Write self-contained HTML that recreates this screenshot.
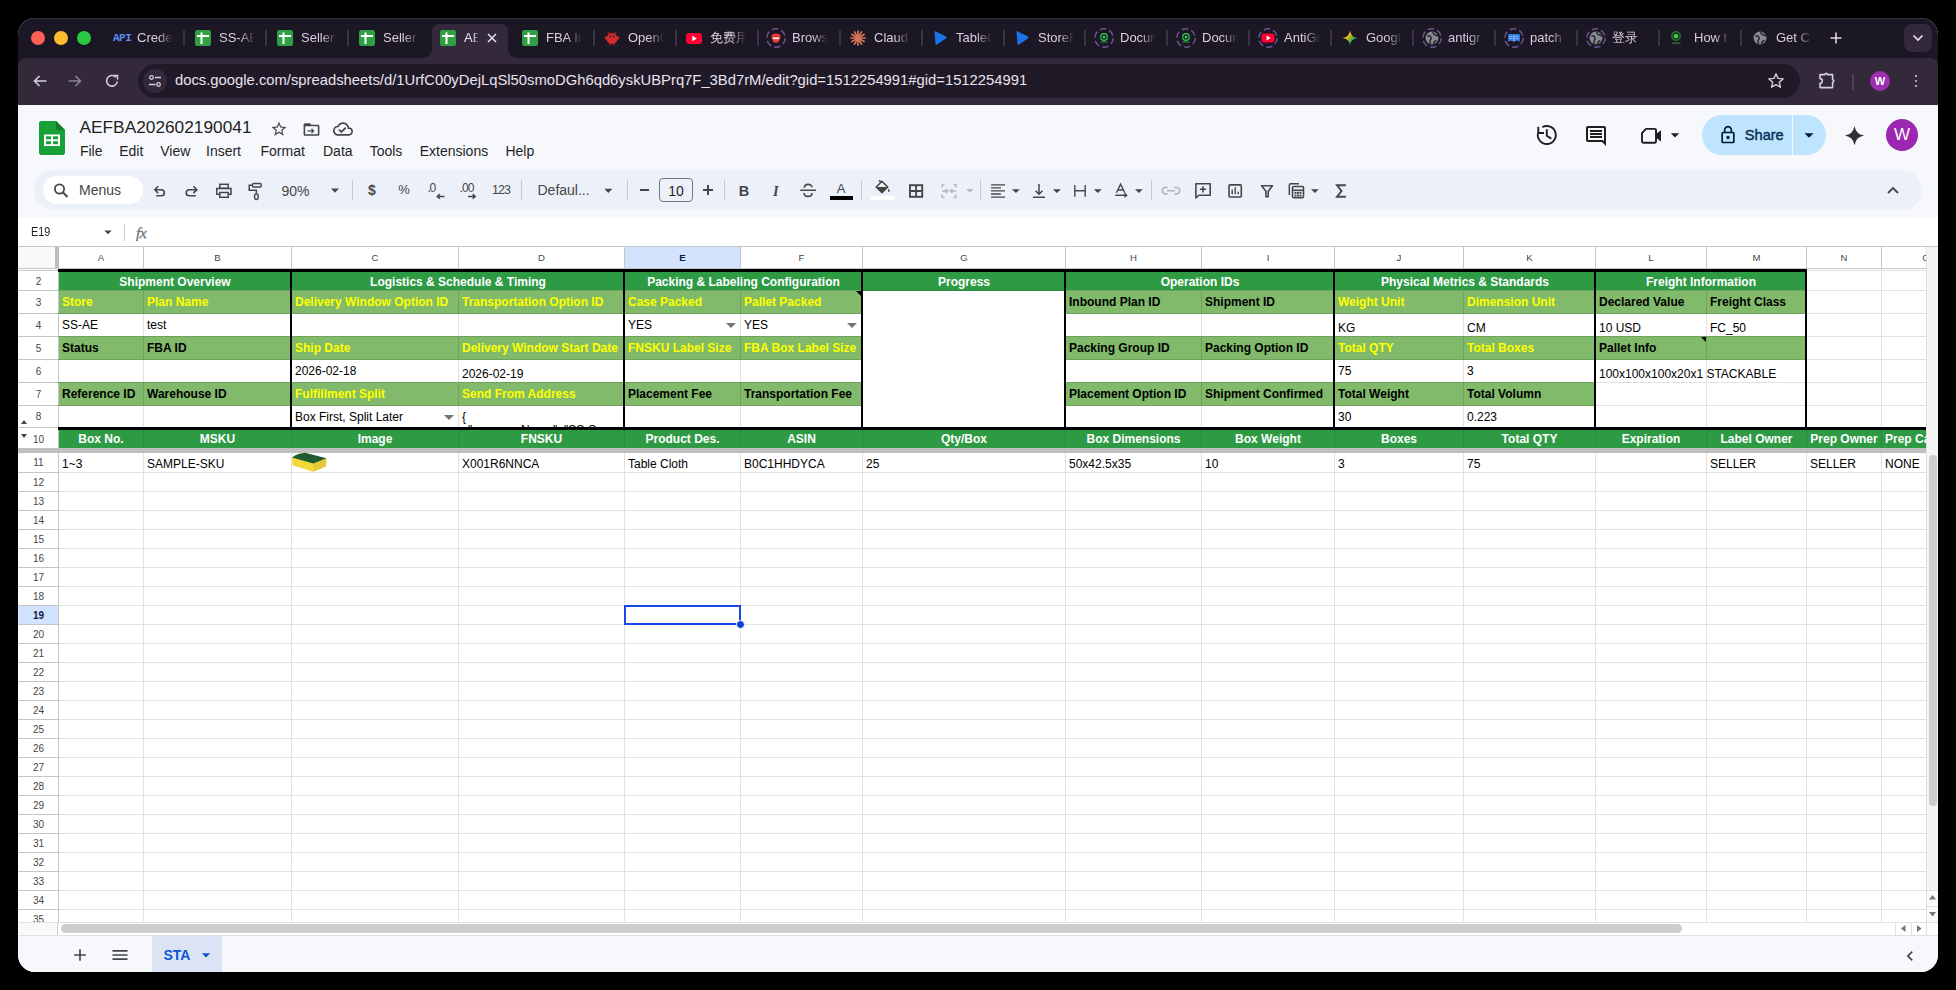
<!DOCTYPE html><html><head><meta charset="utf-8"><style>
*{margin:0;padding:0;box-sizing:border-box}
html,body{width:1956px;height:990px;overflow:hidden;background:#000;font-family:"Liberation Sans",sans-serif}
#win{position:absolute;left:18px;top:18px;width:1920px;height:954px;border-radius:17px;overflow:hidden;background:#fff}
#in{position:absolute;left:-18px;top:-18px;width:1956px;height:990px}
.t{position:absolute;white-space:nowrap}
svg{position:absolute;overflow:visible}
</style></head><body><div id="win"><div id="in">

<div style="position:absolute;left:0px;top:0px;width:1956px;height:105px;background:#1c1724"></div>
<div style="position:absolute;left:18px;top:18px;width:1920px;height:1px;background:#34303b"></div>
<div style="position:absolute;left:31px;top:31px;width:14px;height:14px;background:#ff5f57;border-radius:50%"></div>
<div style="position:absolute;left:54px;top:31px;width:14px;height:14px;background:#febc2e;border-radius:50%"></div>
<div style="position:absolute;left:77px;top:31px;width:14px;height:14px;background:#28c840;border-radius:50%"></div>
<svg style="left:420px;top:24px" width="100" height="34" viewBox="0 0 100 34"><path d="M0 34 Q12 34 12 24 L12 8 Q12 0 20 0 L80 0 Q88 0 88 8 L88 24 Q88 34 100 34 Z" fill="#33293a"/></svg>
<div style="position:absolute;left:183px;top:30px;width:2px;height:16px;background:#3a3443"></div>
<div class="t" style="left:113px;top:33px;font-family:'Liberation Mono',monospace;font-size:11px;line-height:11px;font-weight:bold;color:#5b8def;letter-spacing:-0.5px">API</div>
<div class="t" style="left:137px;top:31px;width:36px;overflow:hidden;font-size:13px;line-height:14px;color:#d9cfe0;-webkit-mask-image:linear-gradient(90deg,#000 58%,transparent 100%)">Crede</div>
<div style="position:absolute;left:265px;top:30px;width:2px;height:16px;background:#3a3443"></div>
<svg style="left:195px;top:30px" width="16" height="16" viewBox="0 0 16 16"><rect x="0" y="0" width="16" height="16" rx="2.5" fill="#2ea043"/><rect x="2" y="5" width="12" height="2" fill="#fff"/><rect x="5.5" y="2.5" width="2" height="11.5" fill="#fff"/></svg>
<div class="t" style="left:219px;top:31px;width:36px;overflow:hidden;font-size:13px;line-height:14px;color:#d9cfe0;-webkit-mask-image:linear-gradient(90deg,#000 58%,transparent 100%)">SS-AE</div>
<div style="position:absolute;left:347px;top:30px;width:2px;height:16px;background:#3a3443"></div>
<svg style="left:277px;top:30px" width="16" height="16" viewBox="0 0 16 16"><rect x="0" y="0" width="16" height="16" rx="2.5" fill="#2ea043"/><rect x="2" y="5" width="12" height="2" fill="#fff"/><rect x="5.5" y="2.5" width="2" height="11.5" fill="#fff"/></svg>
<div class="t" style="left:301px;top:31px;width:36px;overflow:hidden;font-size:13px;line-height:14px;color:#d9cfe0;-webkit-mask-image:linear-gradient(90deg,#000 58%,transparent 100%)">Seller</div>
<svg style="left:359px;top:30px" width="16" height="16" viewBox="0 0 16 16"><rect x="0" y="0" width="16" height="16" rx="2.5" fill="#2ea043"/><rect x="2" y="5" width="12" height="2" fill="#fff"/><rect x="5.5" y="2.5" width="2" height="11.5" fill="#fff"/></svg>
<div class="t" style="left:383px;top:31px;width:36px;overflow:hidden;font-size:13px;line-height:14px;color:#d9cfe0;-webkit-mask-image:linear-gradient(90deg,#000 58%,transparent 100%)">Seller</div>
<svg style="left:440px;top:30px" width="16" height="16" viewBox="0 0 16 16"><rect x="0" y="0" width="16" height="16" rx="2.5" fill="#2ea043"/><rect x="2" y="5" width="12" height="2" fill="#fff"/><rect x="5.5" y="2.5" width="2" height="11.5" fill="#fff"/></svg>
<div class="t" style="left:464px;top:31px;width:15px;overflow:hidden;font-size:13px;line-height:14px;color:#e8e2ee;-webkit-mask-image:linear-gradient(90deg,#000 60%,transparent)">AE</div>
<svg style="left:487px;top:33px" width="10" height="10" viewBox="0 0 10 10"><path d="M1 1L9 9M9 1L1 9" stroke="#e8e2ee" stroke-width="1.5"/></svg>
<div style="position:absolute;left:593px;top:30px;width:2px;height:16px;background:#3a3443"></div>
<svg style="left:522px;top:30px" width="16" height="16" viewBox="0 0 16 16"><rect x="0" y="0" width="16" height="16" rx="2.5" fill="#2ea043"/><rect x="2" y="5" width="12" height="2" fill="#fff"/><rect x="5.5" y="2.5" width="2" height="11.5" fill="#fff"/></svg>
<div class="t" style="left:546px;top:31px;width:36px;overflow:hidden;font-size:13px;line-height:14px;color:#d9cfe0;-webkit-mask-image:linear-gradient(90deg,#000 58%,transparent 100%)">FBA In</div>
<div style="position:absolute;left:675px;top:30px;width:2px;height:16px;background:#3a3443"></div>
<svg style="left:604px;top:30px" width="16" height="16" viewBox="0 0 16 16"><path d="M4 2l1.5 2M12 2l-1.5 2" stroke="#c81e1e" stroke-width="1.2"/><ellipse cx="8" cy="8.5" rx="5.5" ry="5.5" fill="#d42a2a"/><circle cx="2.2" cy="8" r="1.5" fill="#d42a2a"/><circle cx="13.8" cy="8" r="1.5" fill="#d42a2a"/><path d="M6 13.5v2M10 13.5v2" stroke="#c81e1e" stroke-width="1.3"/><circle cx="6.3" cy="6.5" r="0.9" fill="#222"/><circle cx="9.7" cy="6.5" r="0.9" fill="#222"/></svg>
<div class="t" style="left:628px;top:31px;width:36px;overflow:hidden;font-size:13px;line-height:14px;color:#d9cfe0;-webkit-mask-image:linear-gradient(90deg,#000 58%,transparent 100%)">OpenC</div>
<div style="position:absolute;left:757px;top:30px;width:2px;height:16px;background:#3a3443"></div>
<svg style="left:686px;top:30px" width="16" height="16" viewBox="0 0 16 16"><rect x="0" y="3" width="16" height="11" rx="3" fill="#ff0033"/><path d="M6.3 5.8v5.4l4.6-2.7z" fill="#fff"/></svg>
<div class="t" style="left:710px;top:31px;width:36px;overflow:hidden;font-size:13px;line-height:14px;color:#d9cfe0;-webkit-mask-image:linear-gradient(90deg,#000 58%,transparent 100%)">免费用</div>
<div style="position:absolute;left:839px;top:30px;width:2px;height:16px;background:#3a3443"></div>
<svg style="left:766px;top:28px" width="20" height="20" viewBox="0 0 20 20"><circle cx="10" cy="10" r="9.2" fill="none" stroke="#6a5590" stroke-width="1.5" stroke-dasharray="6.5 3.2"/><path d="M5 8.5h10l-1.5 4c-.8 1.6-2 2.3-3.5 2.3s-2.7-.7-3.5-2.3z" fill="#e53935"/><ellipse cx="10" cy="8" rx="4.5" ry="2.5" fill="#e53935"/><rect x="7" y="9.5" width="6" height="1.6" fill="#fff"/></svg>
<div class="t" style="left:792px;top:31px;width:36px;overflow:hidden;font-size:13px;line-height:14px;color:#d9cfe0;-webkit-mask-image:linear-gradient(90deg,#000 58%,transparent 100%)">Brows</div>
<div style="position:absolute;left:921px;top:30px;width:2px;height:16px;background:#3a3443"></div>
<svg style="left:850px;top:30px" width="16" height="16" viewBox="0 0 16 16"><line x1="8" y1="8" x2="15.00" y2="8.00" stroke="#d97757" stroke-width="1.7" stroke-linecap="round"/><line x1="8" y1="8" x2="14.06" y2="11.50" stroke="#d97757" stroke-width="1.7" stroke-linecap="round"/><line x1="8" y1="8" x2="11.50" y2="14.06" stroke="#d97757" stroke-width="1.7" stroke-linecap="round"/><line x1="8" y1="8" x2="8.00" y2="15.00" stroke="#d97757" stroke-width="1.7" stroke-linecap="round"/><line x1="8" y1="8" x2="4.50" y2="14.06" stroke="#d97757" stroke-width="1.7" stroke-linecap="round"/><line x1="8" y1="8" x2="1.94" y2="11.50" stroke="#d97757" stroke-width="1.7" stroke-linecap="round"/><line x1="8" y1="8" x2="1.00" y2="8.00" stroke="#d97757" stroke-width="1.7" stroke-linecap="round"/><line x1="8" y1="8" x2="1.94" y2="4.50" stroke="#d97757" stroke-width="1.7" stroke-linecap="round"/><line x1="8" y1="8" x2="4.50" y2="1.94" stroke="#d97757" stroke-width="1.7" stroke-linecap="round"/><line x1="8" y1="8" x2="8.00" y2="1.00" stroke="#d97757" stroke-width="1.7" stroke-linecap="round"/><line x1="8" y1="8" x2="11.50" y2="1.94" stroke="#d97757" stroke-width="1.7" stroke-linecap="round"/><line x1="8" y1="8" x2="14.06" y2="4.50" stroke="#d97757" stroke-width="1.7" stroke-linecap="round"/></svg>
<div class="t" style="left:874px;top:31px;width:36px;overflow:hidden;font-size:13px;line-height:14px;color:#d9cfe0;-webkit-mask-image:linear-gradient(90deg,#000 58%,transparent 100%)">Claud</div>
<div style="position:absolute;left:1003px;top:30px;width:2px;height:16px;background:#3a3443"></div>
<svg style="left:932px;top:30px" width="16" height="16" viewBox="0 0 16 16"><path d="M2.5 2.2 Q2.2 1 3.5 1.3 L14 6.6 Q15.3 7.5 14 8.4 L5 14.5 Q3.8 15.2 3.5 14 Z" fill="#1a73e8"/></svg>
<div class="t" style="left:956px;top:31px;width:36px;overflow:hidden;font-size:13px;line-height:14px;color:#d9cfe0;-webkit-mask-image:linear-gradient(90deg,#000 58%,transparent 100%)">TableC</div>
<div style="position:absolute;left:1084px;top:30px;width:2px;height:16px;background:#3a3443"></div>
<svg style="left:1014px;top:30px" width="16" height="16" viewBox="0 0 16 16"><path d="M2.5 2.2 Q2.2 1 3.5 1.3 L14 6.6 Q15.3 7.5 14 8.4 L5 14.5 Q3.8 15.2 3.5 14 Z" fill="#1a73e8"/></svg>
<div class="t" style="left:1038px;top:31px;width:36px;overflow:hidden;font-size:13px;line-height:14px;color:#d9cfe0;-webkit-mask-image:linear-gradient(90deg,#000 58%,transparent 100%)">StoreR</div>
<div style="position:absolute;left:1166px;top:30px;width:2px;height:16px;background:#3a3443"></div>
<svg style="left:1094px;top:28px" width="20" height="20" viewBox="0 0 20 20"><circle cx="10" cy="10" r="9.2" fill="none" stroke="#6a5590" stroke-width="1.5" stroke-dasharray="6.5 3.2"/><circle cx="10" cy="9" r="3.3" fill="none" stroke="#34c759" stroke-width="1.2"/><circle cx="10" cy="9" r="1.5" fill="#34c759"/><rect x="6.5" y="13.5" width="7" height="1" fill="#2e9a44"/></svg>
<div class="t" style="left:1120px;top:31px;width:36px;overflow:hidden;font-size:13px;line-height:14px;color:#d9cfe0;-webkit-mask-image:linear-gradient(90deg,#000 58%,transparent 100%)">Docun</div>
<div style="position:absolute;left:1248px;top:30px;width:2px;height:16px;background:#3a3443"></div>
<svg style="left:1176px;top:28px" width="20" height="20" viewBox="0 0 20 20"><circle cx="10" cy="10" r="9.2" fill="none" stroke="#6a5590" stroke-width="1.5" stroke-dasharray="6.5 3.2"/><circle cx="10" cy="9" r="3.3" fill="none" stroke="#34c759" stroke-width="1.2"/><circle cx="10" cy="9" r="1.5" fill="#34c759"/><rect x="6.5" y="13.5" width="7" height="1" fill="#2e9a44"/></svg>
<div class="t" style="left:1202px;top:31px;width:36px;overflow:hidden;font-size:13px;line-height:14px;color:#d9cfe0;-webkit-mask-image:linear-gradient(90deg,#000 58%,transparent 100%)">Docun</div>
<div style="position:absolute;left:1330px;top:30px;width:2px;height:16px;background:#3a3443"></div>
<svg style="left:1258px;top:28px" width="20" height="20" viewBox="0 0 20 20"><circle cx="10" cy="10" r="9.2" fill="none" stroke="#6a5590" stroke-width="1.5" stroke-dasharray="6.5 3.2"/><rect x="3.5" y="5.5" width="13" height="9" rx="2.5" fill="#ff0033"/><path d="M8.6 7.6v4.8l4-2.4z" fill="#fff"/></svg>
<div class="t" style="left:1284px;top:31px;width:36px;overflow:hidden;font-size:13px;line-height:14px;color:#d9cfe0;-webkit-mask-image:linear-gradient(90deg,#000 58%,transparent 100%)">AntiGr</div>
<div style="position:absolute;left:1412px;top:30px;width:2px;height:16px;background:#3a3443"></div>
<svg style="left:1342px;top:30px" width="16" height="16" viewBox="0 0 16 16"><defs><linearGradient id="gg" x1="0" y1="0" x2="1" y2="1"><stop offset="0" stop-color="#ea4335"/><stop offset="0.35" stop-color="#fbbc04"/><stop offset="0.65" stop-color="#34a853"/><stop offset="1" stop-color="#4285f4"/></linearGradient></defs><path d="M8 0.5 Q8.8 7.2 15.5 8 Q8.8 8.8 8 15.5 Q7.2 8.8 0.5 8 Q7.2 7.2 8 0.5Z" fill="url(#gg)"/></svg>
<div class="t" style="left:1366px;top:31px;width:36px;overflow:hidden;font-size:13px;line-height:14px;color:#d9cfe0;-webkit-mask-image:linear-gradient(90deg,#000 58%,transparent 100%)">Googl</div>
<div style="position:absolute;left:1494px;top:30px;width:2px;height:16px;background:#3a3443"></div>
<svg style="left:1422px;top:28px" width="20" height="20" viewBox="0 0 20 20"><circle cx="10" cy="10" r="9.2" fill="none" stroke="#6a5590" stroke-width="1.5" stroke-dasharray="6.5 3.2"/><circle cx="10" cy="10" r="6.5" fill="#868c91"/><path d="M5.2 8.2Q7.5 7 8.8 9Q9.6 10.6 8.3 12.2Q7.6 13.5 8.5 16M11.2 3.8Q10.5 5.8 12.5 6.5Q14.5 7 16.2 8.5M11.5 16Q12 13 14.5 12.5" stroke="#2a2531" stroke-width="1.5" fill="none"/></svg>
<div class="t" style="left:1448px;top:31px;width:36px;overflow:hidden;font-size:13px;line-height:14px;color:#d9cfe0;-webkit-mask-image:linear-gradient(90deg,#000 58%,transparent 100%)">antigr</div>
<div style="position:absolute;left:1576px;top:30px;width:2px;height:16px;background:#3a3443"></div>
<svg style="left:1504px;top:28px" width="20" height="20" viewBox="0 0 20 20"><circle cx="10" cy="10" r="9.2" fill="none" stroke="#6a5590" stroke-width="1.5" stroke-dasharray="6.5 3.2"/><path d="M4 6.5q3-1.5 6 0q3-1.5 6 0v7q-3-1.5-6 0q-3-1.5-6 0z" fill="#2f7de1"/><path d="M10 6.5v7" stroke="#dde" stroke-width="0.8"/><path d="M5.5 8.5h3M5.5 10.5h3M11.5 8.5h3M11.5 10.5h3" stroke="#dde" stroke-width="0.6"/></svg>
<div class="t" style="left:1530px;top:31px;width:36px;overflow:hidden;font-size:13px;line-height:14px;color:#d9cfe0;-webkit-mask-image:linear-gradient(90deg,#000 58%,transparent 100%)">patch</div>
<div style="position:absolute;left:1658px;top:30px;width:2px;height:16px;background:#3a3443"></div>
<svg style="left:1586px;top:28px" width="20" height="20" viewBox="0 0 20 20"><circle cx="10" cy="10" r="9.2" fill="none" stroke="#6a5590" stroke-width="1.5" stroke-dasharray="6.5 3.2"/><circle cx="10" cy="10" r="6.5" fill="#868c91"/><path d="M5.2 8.2Q7.5 7 8.8 9Q9.6 10.6 8.3 12.2Q7.6 13.5 8.5 16M11.2 3.8Q10.5 5.8 12.5 6.5Q14.5 7 16.2 8.5M11.5 16Q12 13 14.5 12.5" stroke="#2a2531" stroke-width="1.5" fill="none"/></svg>
<div class="t" style="left:1612px;top:31px;width:36px;overflow:hidden;font-size:13px;line-height:14px;color:#d9cfe0;-webkit-mask-image:linear-gradient(90deg,#000 58%,transparent 100%)">登录</div>
<div style="position:absolute;left:1740px;top:30px;width:2px;height:16px;background:#3a3443"></div>
<svg style="left:1670px;top:30px" width="16" height="16" viewBox="0 0 16 16"><circle cx="6" cy="6" r="4.2" fill="none" stroke="#267a2c" stroke-width="1.4"/><circle cx="6" cy="6.2" r="2.4" fill="#3fc93f"/><path d="M2 13.2h8.5" stroke="#2a7f30" stroke-width="1.3"/></svg>
<div class="t" style="left:1694px;top:31px;width:36px;overflow:hidden;font-size:13px;line-height:14px;color:#d9cfe0;-webkit-mask-image:linear-gradient(90deg,#000 58%,transparent 100%)">How t</div>
<svg style="left:1752px;top:30px" width="16" height="16" viewBox="2 2 16 16"><g><circle cx="10" cy="10" r="6.5" fill="#868c91"/><path d="M5.2 8.2Q7.5 7 8.8 9Q9.6 10.6 8.3 12.2Q7.6 13.5 8.5 16M11.2 3.8Q10.5 5.8 12.5 6.5Q14.5 7 16.2 8.5M11.5 16Q12 13 14.5 12.5" stroke="#2a2531" stroke-width="1.5" fill="none"/></g></svg>
<div class="t" style="left:1776px;top:31px;width:36px;overflow:hidden;font-size:13px;line-height:14px;color:#d9cfe0;-webkit-mask-image:linear-gradient(90deg,#000 58%,transparent 100%)">Get C</div>
<svg style="left:1829px;top:31px" width="14" height="14" viewBox="0 0 14 14"><path d="M7 1.5v11M1.5 7h11" stroke="#dcd3e4" stroke-width="1.6"/></svg>
<div style="position:absolute;left:1904px;top:24px;width:28px;height:28px;background:#33293a;border-radius:8px"></div>
<svg style="left:1912px;top:34px" width="12" height="8" viewBox="0 0 12 8"><path d="M1.5 1.5L6 6L10.5 1.5" stroke="#e8e2ee" stroke-width="1.7" fill="none"/></svg>
<div style="position:absolute;left:18px;top:58px;width:1920px;height:47px;background:#33293a;border-radius:8px 8px 0 0"></div>
<svg style="left:32px;top:73px" width="16" height="16" viewBox="0 0 16 16"><path d="M14.5 8H2.5M7.5 3L2.5 8l5 5" stroke="#d6cfdc" stroke-width="1.6" fill="none"/></svg>
<svg style="left:67px;top:73px" width="16" height="16" viewBox="0 0 16 16"><path d="M1.5 8h12M8.5 3l5 5-5 5" stroke="#8a8392" stroke-width="1.6" fill="none"/></svg>
<svg style="left:104px;top:73px" width="16" height="16" viewBox="0 0 16 16"><path d="M13.2 8.5A5.3 5.3 0 1 1 11.8 4.2" stroke="#d6cfdc" stroke-width="1.6" fill="none"/><path d="M9.5 2.5h4v4" stroke="#d6cfdc" stroke-width="1.6" fill="none"/></svg>
<div style="position:absolute;left:138px;top:64px;width:1662px;height:34px;background:#201a28;border-radius:17px"></div>
<div style="position:absolute;left:143px;top:69px;width:24px;height:24px;background:#33293a;border-radius:50%"></div>
<svg style="left:147px;top:73px" width="16" height="16" viewBox="0 0 16 16"><circle cx="4.5" cy="4.5" r="1.8" stroke="#d6cfdc" stroke-width="1.3" fill="none"/><path d="M8 4.5h6" stroke="#d6cfdc" stroke-width="1.4"/><circle cx="11.5" cy="11.5" r="1.8" stroke="#d6cfdc" stroke-width="1.3" fill="none"/><path d="M2 11.5h6.5" stroke="#d6cfdc" stroke-width="1.4"/></svg>
<div class="t" style="left:175px;top:72px;font-size:14.8px;line-height:17px;color:#e8e3ec">docs.google.com/spreadsheets/d/1UrfC00yDejLqSl50smoDGh6qd6yskUBPrq7F_3Bd7rM/edit?gid=1512254991#gid=1512254991</div>
<svg style="left:1767px;top:72px" width="18" height="18" viewBox="0 0 18 18"><path d="M9 1.8l2.1 4.6 5 .5-3.8 3.4 1.1 4.9L9 12.7l-4.4 2.5 1.1-4.9L1.9 6.9l5-.5z" stroke="#d6cfdc" stroke-width="1.4" fill="none" stroke-linejoin="round"/></svg>
<svg style="left:1812px;top:66px" width="30" height="30" viewBox="1812 66 30 30"><path d="M1820 74.6H1825A1.2 1.2 0 0 1 1827.4 74.6H1832.6V79.8A1.2 1.2 0 0 1 1832.6 82.2V87.6H1820V83.2A2.3 2.3 0 0 0 1820 78.6Z" stroke="#d6cfdc" stroke-width="1.6" fill="none" stroke-linejoin="round"/></svg>
<div style="position:absolute;left:1852px;top:74px;width:2px;height:16px;background:#4a4452"></div>
<div style="position:absolute;left:1870px;top:71px;width:20px;height:20px;background:#9b2fae;border-radius:50%"><div style="font-size:11px;line-height:20px;text-align:center;color:#fff;font-weight:bold">W</div></div>
<div style="position:absolute;left:1914.7px;top:74.5px;width:2.6px;height:2.6px;background:#d6cfdc;border-radius:50%"></div>
<div style="position:absolute;left:1914.7px;top:79.7px;width:2.6px;height:2.6px;background:#d6cfdc;border-radius:50%"></div>
<div style="position:absolute;left:1914.7px;top:84.9px;width:2.6px;height:2.6px;background:#d6cfdc;border-radius:50%"></div>
<div style="position:absolute;left:0px;top:105px;width:1956px;height:113px;background:#f6f8fc"></div>
<svg style="left:39px;top:121px" width="26" height="34" viewBox="0 0 26 34"><path d="M2.5 0H17L26 9V31.5A2.5 2.5 0 0 1 23.5 34H2.5A2.5 2.5 0 0 1 0 31.5V2.5A2.5 2.5 0 0 1 2.5 0Z" fill="#17a037"/><path d="M17 0L26 9H19.5A2.5 2.5 0 0 1 17 6.5Z" fill="#127b28"/><rect x="5" y="13.5" width="16" height="11.5" fill="#fff"/><rect x="7" y="15.3" width="5" height="3" fill="#17a037"/><rect x="14" y="15.3" width="5" height="3" fill="#17a037"/><rect x="7" y="20.2" width="5" height="3" fill="#17a037"/><rect x="14" y="20.2" width="5" height="3" fill="#17a037"/></svg>
<div class="t" style="left:79.5px;top:119.16px;font-size:17.3px;line-height:17.3px;color:#1f1f1f;font-weight:normal;">AEFBA202602190041</div>
<svg style="left:270.00px;top:119.50px" width="18" height="18" viewBox="0 0 24 24"><path d="M22 9.24l-7.19-.62L12 2 9.19 8.63 2 9.24l5.46 4.73L5.82 21 12 17.27 18.18 21l-1.63-7.03L22 9.24zM12 15.4l-3.76 2.27 1-4.28-3.32-2.88 4.38-.38L12 6.1l1.71 4.04 4.38.38-3.32 2.88 1 4.28L12 15.4z" fill="#444746"/></svg>
<svg style="left:301.50px;top:119.50px" width="19" height="19" viewBox="0 0 24 24"><path d="M20 6h-8l-2-2H4c-1.1 0-1.99.9-1.99 2L2 18c0 1.1.9 2 2 2h16c1.1 0 2-.9 2-2V8c0-1.1-.9-2-2-2zm0 12H4V8h16v10zM12.5 10.5l-1.06 1.06L12.88 13H7v1.5h5.88l-1.44 1.44L12.5 17l3.25-3.25z" fill="#444746"/></svg>
<svg style="left:333.00px;top:119.00px" width="20" height="20" viewBox="0 0 24 24"><path d="M19.35 10.04C18.67 6.59 15.64 4 12 4 9.11 4 6.6 5.64 5.35 8.04 2.34 8.36 0 10.91 0 14c0 3.31 2.69 6 6 6h13c2.76 0 5-2.24 5-5 0-2.64-2.05-4.78-4.65-4.96zM19 18H6c-2.21 0-4-1.79-4-4 0-2.05 1.53-3.76 3.56-3.97l1.07-.11.5-.95C8.08 7.14 9.94 6 12 6c2.62 0 4.88 1.86 5.39 4.43l.3 1.5 1.53.11c1.56.1 2.78 1.41 2.78 2.96 0 1.65-1.35 3-3 3zm-9-3.82l-2.09-2.09L6.5 13.5 10 17l6.01-6.01-1.41-1.41z" fill="#444746"/></svg>
<div class="t" style="left:79.9px;top:144.35px;font-size:14px;line-height:14px;color:#1f1f1f;font-weight:normal;">File</div>
<div class="t" style="left:119.2px;top:144.35px;font-size:14px;line-height:14px;color:#1f1f1f;font-weight:normal;">Edit</div>
<div class="t" style="left:160.2px;top:144.35px;font-size:14px;line-height:14px;color:#1f1f1f;font-weight:normal;">View</div>
<div class="t" style="left:206px;top:144.35px;font-size:14px;line-height:14px;color:#1f1f1f;font-weight:normal;">Insert</div>
<div class="t" style="left:260.5px;top:144.35px;font-size:14px;line-height:14px;color:#1f1f1f;font-weight:normal;">Format</div>
<div class="t" style="left:323px;top:144.35px;font-size:14px;line-height:14px;color:#1f1f1f;font-weight:normal;">Data</div>
<div class="t" style="left:369.7px;top:144.35px;font-size:14px;line-height:14px;color:#1f1f1f;font-weight:normal;">Tools</div>
<div class="t" style="left:419.7px;top:144.35px;font-size:14px;line-height:14px;color:#1f1f1f;font-weight:normal;">Extensions</div>
<div class="t" style="left:505.4px;top:144.35px;font-size:14px;line-height:14px;color:#1f1f1f;font-weight:normal;">Help</div>
<svg style="left:1532px;top:120px" width="30" height="30" viewBox="1532 120 30 30"><path d="M1538.1 132.7A9 9 0 1 0 1542.3 127.2" stroke="#1f1f1f" stroke-width="1.9" fill="none"/><path d="M1538.3 126.8V133H1544" stroke="#1f1f1f" stroke-width="1.9" fill="none"/><path d="M1546.8 129.3V135.8L1551.3 138.6" stroke="#1f1f1f" stroke-width="1.9" fill="none"/></svg>
<svg style="left:1584.00px;top:124.00px" width="24" height="24" viewBox="0 0 24 24"><path d="M21.99 4c0-1.1-.89-2-1.99-2H4c-1.1 0-2 .9-2 2v12c0 1.1.9 2 2 2h14l4 4-.01-18zM20 4v13.17L18.83 16H4V4h16zM6 12h12v2H6zm0-3h12v2H6zm0-3h12v2H6z" fill="#1f1f1f"/></svg>
<svg style="left:1636px;top:122px" width="30" height="26" viewBox="1636 122 30 26"><path d="M1642 133.2L1646 128.9H1654.8A1.2 1.2 0 0 1 1656 130.1V141.6A1.2 1.2 0 0 1 1654.8 142.8H1643.2A1.2 1.2 0 0 1 1642 141.6Z" stroke="#1f1f1f" stroke-width="1.9" fill="none" stroke-linejoin="round"/><path d="M1656 134L1661 130.2V141.6L1656 137.8Z" fill="#1f1f1f"/></svg>
<svg style="left:1665.00px;top:125.00px" width="20" height="20" viewBox="0 0 24 24"><path d="M7 10l5 5 5-5z" fill="#1f1f1f"/></svg>
<div style="position:absolute;left:1702px;top:115px;width:124px;height:40px;background:#bfe4fd;border-radius:20px"></div>
<div style="position:absolute;left:1792px;top:115px;width:1px;height:40px;background:#f6f8fc"></div>
<svg style="left:1718.00px;top:124.50px" width="20" height="20" viewBox="0 0 24 24"><path d="M18 8h-1V6c0-2.76-2.24-5-5-5S7 3.24 7 6v2H6c-1.1 0-2 .9-2 2v10c0 1.1.9 2 2 2h12c1.1 0 2-.9 2-2V10c0-1.1-.9-2-2-2zM9 6c0-1.66 1.34-3 3-3s3 1.34 3 3v2H9V6zm9 14H6V10h12v10zm-6-3c1.1 0 2-.9 2-2s-.9-2-2-2-2 .9-2 2 .9 2 2 2z" fill="#001d35"/></svg>
<div class="t" style="left:1744.8px;top:127.94px;font-size:14.6px;line-height:14.6px;color:#07325a;font-weight:normal;-webkit-text-stroke:0.45px #07325a">Share</div>
<svg style="left:1798.00px;top:124.00px" width="22" height="22" viewBox="0 0 24 24"><path d="M7 10l5 5 5-5z" fill="#001d35"/></svg>
<svg style="left:1843.50px;top:124.50px" width="21" height="21" viewBox="0 0 24 24"><path d="M12 1Q13.6 10.4 23 12Q13.6 13.6 12 23Q10.4 13.6 1 12Q10.4 10.4 12 1Z" fill="#303030"/></svg>
<div style="position:absolute;left:1886px;top:119px;width:32px;height:32px;background:#9c27b0;border-radius:50%"><div style="font-size:17px;line-height:32px;text-align:center;color:#fff">W</div></div>
<div style="position:absolute;left:34px;top:170px;width:1888px;height:40px;background:#ecf0f9;border-radius:20px"></div>
<div style="position:absolute;left:43px;top:176px;width:100px;height:28px;background:#fff;border-radius:14px"></div>
<svg style="left:50px;top:180px" width="22" height="22" viewBox="50 180 22 22"><circle cx="59.5" cy="189" r="4.6" stroke="#444746" fill="none" stroke-width="1.8"/><path d="M62.8 192.3L67.5 197" stroke="#444746" fill="none" stroke-width="2"/></svg>
<div class="t" style="left:79px;top:183.45px;font-size:14px;line-height:14px;color:#444746;font-weight:normal;">Menus</div>
<svg style="left:150px;top:180px" width="52" height="22" viewBox="150 180 52 22"><path d="M156.2 195.8H161.3A3.05 3.05 0 0 0 161.3 189.7H154.8M158.2 186.3L154.8 189.7L158.2 193.1" stroke="#444746" fill="none" stroke-width="1.6"/><path d="M195.8 195.8H189.3A3.05 3.05 0 0 1 189.3 189.7H196.8M193.4 186.3L196.8 189.7L193.4 193.1" stroke="#444746" fill="none" stroke-width="1.6"/></svg>
<svg style="left:210px;top:178px" width="56" height="26" viewBox="210 178 56 26"><rect x="219.8" y="184.3" width="8.4" height="4" stroke="#444746" fill="none" stroke-width="1.5"/><path d="M219.5 194.3H216.8V188.4H231V194.3H228.5" stroke="#444746" fill="none" stroke-width="1.5"/><rect x="219.8" y="192.5" width="8.4" height="4.8" stroke="#444746" fill="none" stroke-width="1.5"/><rect x="252.3" y="183.6" width="9" height="3.4" rx="1.5" stroke="#444746" fill="none" stroke-width="1.5"/><path d="M252.3 185.2H249.2V190.3H256.4V193.6" stroke="#444746" fill="none" stroke-width="1.5"/><rect x="254.6" y="194.1" width="3.6" height="5.3" rx="1.6" stroke="#444746" fill="none" stroke-width="1.5"/></svg>
<div class="t" style="left:281.5px;top:184.25px;font-size:14px;line-height:14px;color:#444746;font-weight:normal;">90%</div>
<svg style="left:325px;top:182px" width="20" height="16" viewBox="325 182 20 16"><path d="M331 188.6h8l-4.0 4.2z" fill="#444746"/></svg>
<div style="position:absolute;left:352px;top:180px;width:1px;height:20px;background:#c7c7c7"></div>
<div class="t" style="left:72px;width:600px;text-align:center;top:183.05px;font-size:14px;line-height:14px;color:#444746;font-weight:bold;">$</div>
<div class="t" style="left:104px;width:600px;text-align:center;top:183.30px;font-size:13px;line-height:13px;color:#444746;font-weight:normal;">%</div>
<div class="t" style="left:427.4px;top:181.72px;font-size:12.5px;line-height:12.5px;color:#444746;font-weight:normal;">.</div>
<div class="t" style="left:429.5px;top:182.14px;font-size:12px;line-height:12px;color:#444746;font-weight:normal;letter-spacing:-0.3px">0</div>
<div class="t" style="left:459.6px;top:181.72px;font-size:12.5px;line-height:12.5px;color:#444746;font-weight:normal;">.</div>
<div class="t" style="left:462px;top:182.14px;font-size:12px;line-height:12px;color:#444746;font-weight:normal;letter-spacing:-0.8px">00</div>
<svg style="left:430px;top:190px" width="50" height="12" viewBox="430 190 50 12"><path d="M444.5 196.4H437.5M439.8 194.1L437.3 196.4L439.8 198.7" stroke="#444746" fill="none" stroke-width="1.5"/><path d="M468 196.4H475M472.7 194.1L475.2 196.4L472.7 198.7" stroke="#444746" fill="none" stroke-width="1.5"/></svg>
<div class="t" style="left:492px;top:183.70px;font-size:12.4px;line-height:12.4px;color:#444746;font-weight:normal;letter-spacing:-0.9px">123</div>
<div style="position:absolute;left:521px;top:180px;width:1px;height:20px;background:#c7c7c7"></div>
<div class="t" style="left:537.5px;top:183.35px;font-size:14px;line-height:14px;color:#444746;font-weight:normal;">Defaul...</div>
<svg style="left:600px;top:182px" width="20" height="16" viewBox="600 182 20 16"><path d="M604.3 188.8h8l-4.0 4.2z" fill="#444746"/></svg>
<div style="position:absolute;left:627px;top:180px;width:1px;height:20px;background:#c7c7c7"></div>
<div style="position:absolute;left:639.5px;top:189.2px;width:9.5px;height:1.7px;background:#444746"></div>
<div style="position:absolute;left:659px;top:178px;width:34px;height:24px;border:1px solid #747775;border-radius:4px"></div>
<div class="t" style="left:376px;width:600px;text-align:center;top:183.65px;font-size:14px;line-height:14px;color:#1f1f1f;font-weight:normal;">10</div>
<div style="position:absolute;left:703px;top:189.2px;width:10px;height:1.7px;background:#444746"></div>
<div style="position:absolute;left:707.15px;top:185px;width:1.7px;height:10px;background:#444746"></div>
<div style="position:absolute;left:724px;top:180px;width:1px;height:20px;background:#c7c7c7"></div>
<div class="t" style="left:444px;width:600px;text-align:center;top:183.73px;font-size:14.5px;line-height:14.5px;color:#444746;font-weight:bold;">B</div>
<div class="t" style="left:475.79999999999995px;width:600px;text-align:center;top:183.73px;font-size:14.5px;line-height:14.5px;color:#444746;font-weight:bold;font-family:'Liberation Serif',serif"><i>I</i></div>
<svg style="left:795px;top:180px" width="26" height="22" viewBox="795 180 26 22"><path d="M800.3 190.2H816" stroke="#444746" fill="none" stroke-width="1.6"/><path d="M804.3 187.8C804.3 183.3 812 183.3 812 187.3M804.1 193C804.1 197.5 812 197.5 812 193" stroke="#444746" fill="none" stroke-width="1.6"/></svg>
<div class="t" style="left:541px;width:600px;text-align:center;top:182.00px;font-size:13px;line-height:13px;color:#444746;font-weight:normal;">A</div>
<div style="position:absolute;left:830px;top:196px;width:23px;height:4px;background:#000"></div>
<div style="position:absolute;left:861px;top:180px;width:1px;height:20px;background:#c7c7c7"></div>
<svg style="left:870px;top:176px" width="26" height="22" viewBox="870 176 26 22"><path d="M876.3 187L882 181.3L887.6 187L882 192.6Z" stroke="#444746" fill="none" stroke-width="1.6"/><path d="M876.3 187H887.6L882 192.6Z" fill="#444746"/><path d="M879 180.3L881.5 182.5" stroke="#444746" fill="none" stroke-width="1.6"/><path d="M888.8 188.8Q887 191 888.8 192.3Q890.5 191 888.8 188.8Z" fill="#444746"/></svg>
<div style="position:absolute;left:871.2px;top:196px;width:22.6px;height:4px;background:#fff"></div>
<svg style="left:905px;top:180px" width="22" height="22" viewBox="905 180 22 22"><rect x="910" y="185.2" width="12.2" height="11.6" stroke="#444746" fill="none" stroke-width="1.9"/><path d="M916.1 185.2V196.8M910 191H922.2" stroke="#444746" fill="none" stroke-width="1.8"/></svg>
<svg style="left:938px;top:180px" width="40" height="22" viewBox="938 180 40 22"><path d="M942 184.5V187.5M942 194.5V197.5M942 184.5H944.5M942 197.5H944.5M956 184.5V187.5M956 194.5V197.5M956 184.5H953.5M956 197.5H953.5M942 191H947.5M945.5 189L947.7 191L945.5 193M956 191H950.5M952.5 189L950.3 191L952.5 193" stroke="#b5b5b5" stroke-width="1.5" fill="none"/><path d="M966.3 189h7.3l-3.65 3.5z" fill="#b5b5b5"/></svg>
<div style="position:absolute;left:980px;top:180px;width:1px;height:20px;background:#c7c7c7"></div>
<svg style="left:985px;top:180px" width="40" height="22" viewBox="985 180 40 22"><path d="M991.1 184.9H1005" stroke="#444746" fill="none" stroke-width="1.4"/><path d="M991.1 187.9H1000.9" stroke="#444746" fill="none" stroke-width="1.4"/><path d="M991.1 190.9H1005" stroke="#444746" fill="none" stroke-width="1.4"/><path d="M991.1 194H1000.9" stroke="#444746" fill="none" stroke-width="1.4"/><path d="M991.1 197.1H1005" stroke="#444746" fill="none" stroke-width="1.4"/><path d="M1012 189.2h7.8l-3.9 3.8z" fill="#444746"/></svg>
<svg style="left:1028px;top:180px" width="40" height="22" viewBox="1028 180 40 22"><path d="M1039 183.9V194M1035.5 190.8L1039 194.3L1042.5 190.8M1033 197.2H1045" stroke="#444746" fill="none" stroke-width="1.5"/><path d="M1052.9 189.2h8l-4.0 3.8z" fill="#444746"/></svg>
<svg style="left:1070px;top:180px" width="40" height="22" viewBox="1070 180 40 22"><path d="M1074.8 185V196.8M1085.2 185V196.8M1074.8 190.8H1085.2" stroke="#444746" fill="none" stroke-width="1.4"/><path d="M1093.8 189.2h8l-4.0 3.8z" fill="#444746"/></svg>
<svg style="left:1110px;top:180px" width="40" height="22" viewBox="1110 180 40 22"><path d="M1116.4 192.8L1120.6 184.2L1124.8 192.8M1117.9 190H1123.3M1115.3 195.3H1126.3M1124.5 193.3L1126.7 195.3L1124.5 197.3" stroke="#444746" fill="none" stroke-width="1.4"/><path d="M1135 189.2h7.8l-3.9 3.8z" fill="#444746"/></svg>
<div style="position:absolute;left:1151px;top:180px;width:1px;height:20px;background:#c7c7c7"></div>
<svg style="left:1158px;top:182px" width="26" height="16" viewBox="1158 182 26 16"><path d="M1167.5 187.5H1165.5A3.2 3.2 0 0 0 1165.5 193.9H1167.5M1174.5 187.5H1176.5A3.2 3.2 0 0 1 1176.5 193.9H1174.5M1167 190.7H1175" stroke="#b5b5b5" stroke-width="1.6" fill="none"/></svg>
<svg style="left:1190px;top:178px" width="26" height="24" viewBox="1190 178 26 24"><path d="M1195.9 198V183.8H1210.2V195.2H1198.7Z" stroke="#444746" fill="none" stroke-width="1.6" stroke-linejoin="round"/><path d="M1203 186.2V192.5M1199.9 189.3H1206.1" stroke="#444746" fill="none" stroke-width="1.6"/></svg>
<svg style="left:1224px;top:180px" width="24" height="22" viewBox="1224 180 24 22"><rect x="1229" y="184.9" width="12.3" height="12.1" rx="1" stroke="#444746" fill="none" stroke-width="1.6"/><path d="M1232.2 189.5V194.3M1235.2 187.3V194.3M1238.2 191.8V194.3" stroke="#444746" fill="none" stroke-width="1.4"/></svg>
<svg style="left:1256px;top:180px" width="24" height="22" viewBox="1256 180 24 22"><path d="M1261.6 185.7H1272.5L1268.2 191.2V196.8H1265.9V191.2Z" stroke="#444746" fill="none" stroke-width="1.6" stroke-linejoin="round"/></svg>
<svg style="left:1284px;top:178px" width="40" height="24" viewBox="1284 178 40 24"><path d="M1289.3 195V185.2A1.5 1.5 0 0 1 1290.8 183.7H1299" stroke="#444746" fill="none" stroke-width="1.5"/><rect x="1292.5" y="186.5" width="11" height="11.3" rx="1.2" stroke="#444746" fill="none" stroke-width="1.6"/><path d="M1292.5 190.3H1303.5" stroke="#444746" fill="none" stroke-width="1.4"/><rect x="1294.5" y="191.8" width="2" height="2" fill="#444746"/><rect x="1294.5" y="194.6" width="2" height="2" fill="#444746"/><rect x="1297" y="191.8" width="2" height="2" fill="#444746"/><rect x="1297" y="194.6" width="2" height="2" fill="#444746"/><rect x="1299.5" y="191.8" width="2" height="2" fill="#444746"/><rect x="1299.5" y="194.6" width="2" height="2" fill="#444746"/><path d="M1311 189.2h7.8l-3.9 3.8z" fill="#444746"/></svg>
<svg style="left:1332px;top:180px" width="20" height="22" viewBox="1332 180 20 22"><path d="M1344.9 186.2V185.3H1337L1341.5 191L1337 196.7H1344.9V195.8" stroke="#444746" fill="none" stroke-width="1.9" stroke-linejoin="miter"/></svg>
<svg style="left:1880px;top:180px" width="26" height="20" viewBox="1880 180 26 20"><path d="M1888 193L1893 188L1898 193" stroke="#444746" fill="none" stroke-width="1.8"/></svg>
<div style="position:absolute;left:0px;top:218px;width:1956px;height:28px;background:#fff"></div>
<div class="t" style="left:31.3px;top:225.00px;font-size:13px;line-height:13px;color:#1f1f1f;font-weight:normal;transform:scaleX(0.83);transform-origin:0 0">E19</div>
<svg style="left:99.00px;top:223.00px" width="18" height="18" viewBox="0 0 24 24"><path d="M7 10l5 5 5-5z" fill="#444746"/></svg>
<div style="position:absolute;left:124px;top:224px;width:1px;height:17px;background:#c7c7c7"></div>
<div class="t" style="left:136px;top:224.88px;font-size:15.5px;line-height:15.5px;color:#6f7378;font-weight:normal;font-family:'Liberation Serif',serif;-webkit-text-stroke:0.3px #6f7378;letter-spacing:-0.5px"><i>fx</i></div>
<div style="position:absolute;left:0px;top:246px;width:1926px;height:676px;background:#fff"></div>
<div style="position:absolute;left:18px;top:246px;width:1908px;height:1px;background:#c4c7c5"></div>
<div style="position:absolute;left:18px;top:247px;width:37px;height:22px;background:#f8f9fa"></div>
<div style="position:absolute;left:55px;top:247px;width:4px;height:22px;background:#bdbdbd"></div>
<div style="position:absolute;left:625px;top:247px;width:115px;height:21px;background:#d3e3fd"></div>
<div style="position:absolute;left:18px;top:268px;width:1908px;height:1px;background:#c4c7c5"></div>
<div style="position:absolute;left:143px;top:247px;width:1px;height:21px;background:#c4c7c5"></div>
<div style="position:absolute;left:291px;top:247px;width:1px;height:21px;background:#c4c7c5"></div>
<div style="position:absolute;left:458px;top:247px;width:1px;height:21px;background:#c4c7c5"></div>
<div style="position:absolute;left:624px;top:247px;width:1px;height:21px;background:#c4c7c5"></div>
<div style="position:absolute;left:740px;top:247px;width:1px;height:21px;background:#c4c7c5"></div>
<div style="position:absolute;left:862px;top:247px;width:1px;height:21px;background:#c4c7c5"></div>
<div style="position:absolute;left:1065px;top:247px;width:1px;height:21px;background:#c4c7c5"></div>
<div style="position:absolute;left:1201px;top:247px;width:1px;height:21px;background:#c4c7c5"></div>
<div style="position:absolute;left:1334px;top:247px;width:1px;height:21px;background:#c4c7c5"></div>
<div style="position:absolute;left:1463px;top:247px;width:1px;height:21px;background:#c4c7c5"></div>
<div style="position:absolute;left:1595px;top:247px;width:1px;height:21px;background:#c4c7c5"></div>
<div style="position:absolute;left:1706px;top:247px;width:1px;height:21px;background:#c4c7c5"></div>
<div style="position:absolute;left:1806px;top:247px;width:1px;height:21px;background:#c4c7c5"></div>
<div style="position:absolute;left:1881px;top:247px;width:1px;height:21px;background:#c4c7c5"></div>
<div class="t" style="left:-199.0px;width:600px;text-align:center;top:252.87px;font-size:9.6px;line-height:9.6px;color:#444746;font-weight:normal;">A</div>
<div class="t" style="left:-82.5px;width:600px;text-align:center;top:252.87px;font-size:9.6px;line-height:9.6px;color:#444746;font-weight:normal;">B</div>
<div class="t" style="left:75.0px;width:600px;text-align:center;top:252.87px;font-size:9.6px;line-height:9.6px;color:#444746;font-weight:normal;">C</div>
<div class="t" style="left:241.5px;width:600px;text-align:center;top:252.87px;font-size:9.6px;line-height:9.6px;color:#444746;font-weight:normal;">D</div>
<div class="t" style="left:382.5px;width:600px;text-align:center;top:252.87px;font-size:9.6px;line-height:9.6px;color:#041e49;font-weight:bold;">E</div>
<div class="t" style="left:501.5px;width:600px;text-align:center;top:252.87px;font-size:9.6px;line-height:9.6px;color:#444746;font-weight:normal;">F</div>
<div class="t" style="left:664.0px;width:600px;text-align:center;top:252.87px;font-size:9.6px;line-height:9.6px;color:#444746;font-weight:normal;">G</div>
<div class="t" style="left:833.5px;width:600px;text-align:center;top:252.87px;font-size:9.6px;line-height:9.6px;color:#444746;font-weight:normal;">H</div>
<div class="t" style="left:968.0px;width:600px;text-align:center;top:252.87px;font-size:9.6px;line-height:9.6px;color:#444746;font-weight:normal;">I</div>
<div class="t" style="left:1099.0px;width:600px;text-align:center;top:252.87px;font-size:9.6px;line-height:9.6px;color:#444746;font-weight:normal;">J</div>
<div class="t" style="left:1229.5px;width:600px;text-align:center;top:252.87px;font-size:9.6px;line-height:9.6px;color:#444746;font-weight:normal;">K</div>
<div class="t" style="left:1351.0px;width:600px;text-align:center;top:252.87px;font-size:9.6px;line-height:9.6px;color:#444746;font-weight:normal;">L</div>
<div class="t" style="left:1456.5px;width:600px;text-align:center;top:252.87px;font-size:9.6px;line-height:9.6px;color:#444746;font-weight:normal;">M</div>
<div class="t" style="left:1544.0px;width:600px;text-align:center;top:252.87px;font-size:9.6px;line-height:9.6px;color:#444746;font-weight:normal;">N</div>
<div class="t" style="left:1626.0px;width:600px;text-align:center;top:252.87px;font-size:9.6px;line-height:9.6px;color:#444746;font-weight:normal;">O</div>
<div style="position:absolute;left:18px;top:269px;width:40px;height:653px;background:#fff"></div>
<div style="position:absolute;left:58px;top:269px;width:1px;height:653px;background:#c4c7c5"></div>
<div style="position:absolute;left:18px;top:270px;width:40px;height:1px;background:#c4c7c5"></div>
<div style="position:absolute;left:59px;top:290px;width:1867px;height:1px;background:#e1e1e1"></div>
<div style="position:absolute;left:18px;top:290px;width:40px;height:1px;background:#c4c7c5"></div>
<div style="position:absolute;left:59px;top:313px;width:1867px;height:1px;background:#e1e1e1"></div>
<div style="position:absolute;left:18px;top:313px;width:40px;height:1px;background:#c4c7c5"></div>
<div style="position:absolute;left:59px;top:336px;width:1867px;height:1px;background:#e1e1e1"></div>
<div style="position:absolute;left:18px;top:336px;width:40px;height:1px;background:#c4c7c5"></div>
<div style="position:absolute;left:59px;top:359px;width:1867px;height:1px;background:#e1e1e1"></div>
<div style="position:absolute;left:18px;top:359px;width:40px;height:1px;background:#c4c7c5"></div>
<div style="position:absolute;left:59px;top:382px;width:1867px;height:1px;background:#e1e1e1"></div>
<div style="position:absolute;left:18px;top:382px;width:40px;height:1px;background:#c4c7c5"></div>
<div style="position:absolute;left:59px;top:405px;width:1867px;height:1px;background:#e1e1e1"></div>
<div style="position:absolute;left:18px;top:405px;width:40px;height:1px;background:#c4c7c5"></div>
<div style="position:absolute;left:59px;top:472px;width:1867px;height:1px;background:#e1e1e1"></div>
<div style="position:absolute;left:18px;top:472px;width:40px;height:1px;background:#c4c7c5"></div>
<div style="position:absolute;left:59px;top:491px;width:1867px;height:1px;background:#e1e1e1"></div>
<div style="position:absolute;left:18px;top:491px;width:40px;height:1px;background:#c4c7c5"></div>
<div style="position:absolute;left:59px;top:510px;width:1867px;height:1px;background:#e1e1e1"></div>
<div style="position:absolute;left:18px;top:510px;width:40px;height:1px;background:#c4c7c5"></div>
<div style="position:absolute;left:59px;top:529px;width:1867px;height:1px;background:#e1e1e1"></div>
<div style="position:absolute;left:18px;top:529px;width:40px;height:1px;background:#c4c7c5"></div>
<div style="position:absolute;left:59px;top:548px;width:1867px;height:1px;background:#e1e1e1"></div>
<div style="position:absolute;left:18px;top:548px;width:40px;height:1px;background:#c4c7c5"></div>
<div style="position:absolute;left:59px;top:567px;width:1867px;height:1px;background:#e1e1e1"></div>
<div style="position:absolute;left:18px;top:567px;width:40px;height:1px;background:#c4c7c5"></div>
<div style="position:absolute;left:59px;top:586px;width:1867px;height:1px;background:#e1e1e1"></div>
<div style="position:absolute;left:18px;top:586px;width:40px;height:1px;background:#c4c7c5"></div>
<div style="position:absolute;left:59px;top:605px;width:1867px;height:1px;background:#e1e1e1"></div>
<div style="position:absolute;left:18px;top:605px;width:40px;height:1px;background:#c4c7c5"></div>
<div style="position:absolute;left:59px;top:624px;width:1867px;height:1px;background:#e1e1e1"></div>
<div style="position:absolute;left:18px;top:624px;width:40px;height:1px;background:#c4c7c5"></div>
<div style="position:absolute;left:59px;top:643px;width:1867px;height:1px;background:#e1e1e1"></div>
<div style="position:absolute;left:18px;top:643px;width:40px;height:1px;background:#c4c7c5"></div>
<div style="position:absolute;left:59px;top:662px;width:1867px;height:1px;background:#e1e1e1"></div>
<div style="position:absolute;left:18px;top:662px;width:40px;height:1px;background:#c4c7c5"></div>
<div style="position:absolute;left:59px;top:681px;width:1867px;height:1px;background:#e1e1e1"></div>
<div style="position:absolute;left:18px;top:681px;width:40px;height:1px;background:#c4c7c5"></div>
<div style="position:absolute;left:59px;top:700px;width:1867px;height:1px;background:#e1e1e1"></div>
<div style="position:absolute;left:18px;top:700px;width:40px;height:1px;background:#c4c7c5"></div>
<div style="position:absolute;left:59px;top:719px;width:1867px;height:1px;background:#e1e1e1"></div>
<div style="position:absolute;left:18px;top:719px;width:40px;height:1px;background:#c4c7c5"></div>
<div style="position:absolute;left:59px;top:738px;width:1867px;height:1px;background:#e1e1e1"></div>
<div style="position:absolute;left:18px;top:738px;width:40px;height:1px;background:#c4c7c5"></div>
<div style="position:absolute;left:59px;top:757px;width:1867px;height:1px;background:#e1e1e1"></div>
<div style="position:absolute;left:18px;top:757px;width:40px;height:1px;background:#c4c7c5"></div>
<div style="position:absolute;left:59px;top:776px;width:1867px;height:1px;background:#e1e1e1"></div>
<div style="position:absolute;left:18px;top:776px;width:40px;height:1px;background:#c4c7c5"></div>
<div style="position:absolute;left:59px;top:795px;width:1867px;height:1px;background:#e1e1e1"></div>
<div style="position:absolute;left:18px;top:795px;width:40px;height:1px;background:#c4c7c5"></div>
<div style="position:absolute;left:59px;top:814px;width:1867px;height:1px;background:#e1e1e1"></div>
<div style="position:absolute;left:18px;top:814px;width:40px;height:1px;background:#c4c7c5"></div>
<div style="position:absolute;left:59px;top:833px;width:1867px;height:1px;background:#e1e1e1"></div>
<div style="position:absolute;left:18px;top:833px;width:40px;height:1px;background:#c4c7c5"></div>
<div style="position:absolute;left:59px;top:852px;width:1867px;height:1px;background:#e1e1e1"></div>
<div style="position:absolute;left:18px;top:852px;width:40px;height:1px;background:#c4c7c5"></div>
<div style="position:absolute;left:59px;top:871px;width:1867px;height:1px;background:#e1e1e1"></div>
<div style="position:absolute;left:18px;top:871px;width:40px;height:1px;background:#c4c7c5"></div>
<div style="position:absolute;left:59px;top:890px;width:1867px;height:1px;background:#e1e1e1"></div>
<div style="position:absolute;left:18px;top:890px;width:40px;height:1px;background:#c4c7c5"></div>
<div style="position:absolute;left:59px;top:909px;width:1867px;height:1px;background:#e1e1e1"></div>
<div style="position:absolute;left:18px;top:909px;width:40px;height:1px;background:#c4c7c5"></div>
<div style="position:absolute;left:59px;top:928px;width:1867px;height:1px;background:#e1e1e1"></div>
<div style="position:absolute;left:18px;top:928px;width:40px;height:1px;background:#c4c7c5"></div>
<div style="position:absolute;left:18px;top:427px;width:40px;height:1px;background:#c4c7c5"></div>
<div style="position:absolute;left:143px;top:269px;width:1px;height:653px;background:#e1e1e1"></div>
<div style="position:absolute;left:291px;top:269px;width:1px;height:653px;background:#e1e1e1"></div>
<div style="position:absolute;left:458px;top:269px;width:1px;height:653px;background:#e1e1e1"></div>
<div style="position:absolute;left:624px;top:269px;width:1px;height:653px;background:#e1e1e1"></div>
<div style="position:absolute;left:740px;top:269px;width:1px;height:653px;background:#e1e1e1"></div>
<div style="position:absolute;left:862px;top:269px;width:1px;height:653px;background:#e1e1e1"></div>
<div style="position:absolute;left:1065px;top:269px;width:1px;height:653px;background:#e1e1e1"></div>
<div style="position:absolute;left:1201px;top:269px;width:1px;height:653px;background:#e1e1e1"></div>
<div style="position:absolute;left:1334px;top:269px;width:1px;height:653px;background:#e1e1e1"></div>
<div style="position:absolute;left:1463px;top:269px;width:1px;height:653px;background:#e1e1e1"></div>
<div style="position:absolute;left:1595px;top:269px;width:1px;height:653px;background:#e1e1e1"></div>
<div style="position:absolute;left:1706px;top:269px;width:1px;height:653px;background:#e1e1e1"></div>
<div style="position:absolute;left:1806px;top:269px;width:1px;height:653px;background:#e1e1e1"></div>
<div style="position:absolute;left:1881px;top:269px;width:1px;height:653px;background:#e1e1e1"></div>
<div style="position:absolute;left:59px;top:271px;width:1748px;height:20px;background:#2e9a44"></div>
<div style="position:absolute;left:58px;top:290px;width:1749px;height:1px;background:#2a8b3e"></div>
<div style="position:absolute;left:59px;top:290px;width:804px;height:24px;background:#81ba6a"></div>
<div style="position:absolute;left:1066px;top:290px;width:741px;height:24px;background:#81ba6a"></div>
<div style="position:absolute;left:58px;top:313px;width:805px;height:1px;background:#70a25c"></div>
<div style="position:absolute;left:58px;top:290px;width:805px;height:1px;background:#70a25c"></div>
<div style="position:absolute;left:143px;top:291px;width:1px;height:22px;background:#70a25c"></div>
<div style="position:absolute;left:291px;top:291px;width:1px;height:22px;background:#70a25c"></div>
<div style="position:absolute;left:458px;top:291px;width:1px;height:22px;background:#70a25c"></div>
<div style="position:absolute;left:624px;top:291px;width:1px;height:22px;background:#70a25c"></div>
<div style="position:absolute;left:740px;top:291px;width:1px;height:22px;background:#70a25c"></div>
<div style="position:absolute;left:1065px;top:313px;width:742px;height:1px;background:#70a25c"></div>
<div style="position:absolute;left:1065px;top:290px;width:742px;height:1px;background:#70a25c"></div>
<div style="position:absolute;left:1201px;top:291px;width:1px;height:22px;background:#70a25c"></div>
<div style="position:absolute;left:1334px;top:291px;width:1px;height:22px;background:#70a25c"></div>
<div style="position:absolute;left:1463px;top:291px;width:1px;height:22px;background:#70a25c"></div>
<div style="position:absolute;left:1595px;top:291px;width:1px;height:22px;background:#70a25c"></div>
<div style="position:absolute;left:1706px;top:291px;width:1px;height:22px;background:#70a25c"></div>
<div style="position:absolute;left:59px;top:336px;width:804px;height:24px;background:#81ba6a"></div>
<div style="position:absolute;left:1066px;top:336px;width:741px;height:24px;background:#81ba6a"></div>
<div style="position:absolute;left:58px;top:359px;width:805px;height:1px;background:#70a25c"></div>
<div style="position:absolute;left:58px;top:336px;width:805px;height:1px;background:#70a25c"></div>
<div style="position:absolute;left:143px;top:337px;width:1px;height:22px;background:#70a25c"></div>
<div style="position:absolute;left:291px;top:337px;width:1px;height:22px;background:#70a25c"></div>
<div style="position:absolute;left:458px;top:337px;width:1px;height:22px;background:#70a25c"></div>
<div style="position:absolute;left:624px;top:337px;width:1px;height:22px;background:#70a25c"></div>
<div style="position:absolute;left:740px;top:337px;width:1px;height:22px;background:#70a25c"></div>
<div style="position:absolute;left:1065px;top:359px;width:742px;height:1px;background:#70a25c"></div>
<div style="position:absolute;left:1065px;top:336px;width:742px;height:1px;background:#70a25c"></div>
<div style="position:absolute;left:1201px;top:337px;width:1px;height:22px;background:#70a25c"></div>
<div style="position:absolute;left:1334px;top:337px;width:1px;height:22px;background:#70a25c"></div>
<div style="position:absolute;left:1463px;top:337px;width:1px;height:22px;background:#70a25c"></div>
<div style="position:absolute;left:1595px;top:337px;width:1px;height:22px;background:#70a25c"></div>
<div style="position:absolute;left:1706px;top:337px;width:1px;height:22px;background:#70a25c"></div>
<div style="position:absolute;left:59px;top:382px;width:804px;height:24px;background:#81ba6a"></div>
<div style="position:absolute;left:1066px;top:382px;width:530px;height:24px;background:#81ba6a"></div>
<div style="position:absolute;left:58px;top:405px;width:805px;height:1px;background:#70a25c"></div>
<div style="position:absolute;left:58px;top:382px;width:805px;height:1px;background:#70a25c"></div>
<div style="position:absolute;left:143px;top:383px;width:1px;height:22px;background:#70a25c"></div>
<div style="position:absolute;left:291px;top:383px;width:1px;height:22px;background:#70a25c"></div>
<div style="position:absolute;left:458px;top:383px;width:1px;height:22px;background:#70a25c"></div>
<div style="position:absolute;left:624px;top:383px;width:1px;height:22px;background:#70a25c"></div>
<div style="position:absolute;left:740px;top:383px;width:1px;height:22px;background:#70a25c"></div>
<div style="position:absolute;left:1065px;top:405px;width:531px;height:1px;background:#70a25c"></div>
<div style="position:absolute;left:1065px;top:382px;width:531px;height:1px;background:#70a25c"></div>
<div style="position:absolute;left:1201px;top:383px;width:1px;height:22px;background:#70a25c"></div>
<div style="position:absolute;left:1334px;top:383px;width:1px;height:22px;background:#70a25c"></div>
<div style="position:absolute;left:1463px;top:383px;width:1px;height:22px;background:#70a25c"></div>
<div style="position:absolute;left:59px;top:429px;width:1868px;height:20px;background:#2e9a44"></div>
<div style="position:absolute;left:143px;top:430px;width:1px;height:18px;background:#2a8b3e"></div>
<div style="position:absolute;left:291px;top:430px;width:1px;height:18px;background:#2a8b3e"></div>
<div style="position:absolute;left:458px;top:430px;width:1px;height:18px;background:#2a8b3e"></div>
<div style="position:absolute;left:624px;top:430px;width:1px;height:18px;background:#2a8b3e"></div>
<div style="position:absolute;left:740px;top:430px;width:1px;height:18px;background:#2a8b3e"></div>
<div style="position:absolute;left:862px;top:430px;width:1px;height:18px;background:#2a8b3e"></div>
<div style="position:absolute;left:1065px;top:430px;width:1px;height:18px;background:#2a8b3e"></div>
<div style="position:absolute;left:1201px;top:430px;width:1px;height:18px;background:#2a8b3e"></div>
<div style="position:absolute;left:1334px;top:430px;width:1px;height:18px;background:#2a8b3e"></div>
<div style="position:absolute;left:1463px;top:430px;width:1px;height:18px;background:#2a8b3e"></div>
<div style="position:absolute;left:1595px;top:430px;width:1px;height:18px;background:#2a8b3e"></div>
<div style="position:absolute;left:1706px;top:430px;width:1px;height:18px;background:#2a8b3e"></div>
<div style="position:absolute;left:1806px;top:430px;width:1px;height:18px;background:#2a8b3e"></div>
<div style="position:absolute;left:1881px;top:430px;width:1px;height:18px;background:#2a8b3e"></div>
<div style="position:absolute;left:18px;top:448px;width:1908px;height:5px;background:#c0c0c0"></div>
<div style="position:absolute;left:863px;top:291px;width:202px;height:136px;background:#fff"></div>
<div style="position:absolute;left:1807px;top:270px;width:119px;height:1px;background:#e1e1e1"></div>
<div style="position:absolute;left:58px;top:269px;width:1749px;height:3px;background:#000"></div>
<div style="position:absolute;left:58px;top:427px;width:1868px;height:3px;background:#000"></div>
<div style="position:absolute;left:290px;top:269px;width:2px;height:161px;background:#000"></div>
<div style="position:absolute;left:623px;top:269px;width:2px;height:161px;background:#000"></div>
<div style="position:absolute;left:861px;top:269px;width:2px;height:161px;background:#000"></div>
<div style="position:absolute;left:1064px;top:269px;width:2px;height:161px;background:#000"></div>
<div style="position:absolute;left:1333px;top:269px;width:2px;height:161px;background:#000"></div>
<div style="position:absolute;left:1594px;top:269px;width:2px;height:161px;background:#000"></div>
<div style="position:absolute;left:1805px;top:269px;width:2px;height:161px;background:#000"></div>
<div style="position:absolute;left:624px;top:605px;width:117px;height:20px;border:2px solid #1a47e6"></div>
<div style="position:absolute;left:736px;top:620px;width:9px;height:9px;background:#0b3fce;border-radius:50%;border:1px solid #fff"></div>
<div style="position:absolute;left:18px;top:606px;width:40px;height:18px;background:#d3e3fd"></div>
<div class="t" style="left:-261.5px;width:600px;text-align:center;top:276.54px;font-size:10px;line-height:10px;color:#444746;font-weight:normal;">2</div>
<div class="t" style="left:-261.5px;width:600px;text-align:center;top:297.54px;font-size:10px;line-height:10px;color:#444746;font-weight:normal;">3</div>
<div class="t" style="left:-261.5px;width:600px;text-align:center;top:320.54px;font-size:10px;line-height:10px;color:#444746;font-weight:normal;">4</div>
<div class="t" style="left:-261.5px;width:600px;text-align:center;top:343.54px;font-size:10px;line-height:10px;color:#444746;font-weight:normal;">5</div>
<div class="t" style="left:-261.5px;width:600px;text-align:center;top:366.54px;font-size:10px;line-height:10px;color:#444746;font-weight:normal;">6</div>
<div class="t" style="left:-261.5px;width:600px;text-align:center;top:389.54px;font-size:10px;line-height:10px;color:#444746;font-weight:normal;">7</div>
<div class="t" style="left:-261.5px;width:600px;text-align:center;top:412.04px;font-size:10px;line-height:10px;color:#444746;font-weight:normal;">8</div>
<div class="t" style="left:-261.5px;width:600px;text-align:center;top:434.54px;font-size:10px;line-height:10px;color:#444746;font-weight:normal;">10</div>
<div class="t" style="left:-261.5px;width:600px;text-align:center;top:458.04px;font-size:10px;line-height:10px;color:#444746;font-weight:normal;">11</div>
<div class="t" style="left:-261.5px;width:600px;text-align:center;top:477.54px;font-size:10px;line-height:10px;color:#444746;font-weight:normal;">12</div>
<div class="t" style="left:-261.5px;width:600px;text-align:center;top:496.54px;font-size:10px;line-height:10px;color:#444746;font-weight:normal;">13</div>
<div class="t" style="left:-261.5px;width:600px;text-align:center;top:515.53px;font-size:10px;line-height:10px;color:#444746;font-weight:normal;">14</div>
<div class="t" style="left:-261.5px;width:600px;text-align:center;top:534.53px;font-size:10px;line-height:10px;color:#444746;font-weight:normal;">15</div>
<div class="t" style="left:-261.5px;width:600px;text-align:center;top:553.53px;font-size:10px;line-height:10px;color:#444746;font-weight:normal;">16</div>
<div class="t" style="left:-261.5px;width:600px;text-align:center;top:572.53px;font-size:10px;line-height:10px;color:#444746;font-weight:normal;">17</div>
<div class="t" style="left:-261.5px;width:600px;text-align:center;top:591.53px;font-size:10px;line-height:10px;color:#444746;font-weight:normal;">18</div>
<div class="t" style="left:-261.5px;width:600px;text-align:center;top:610.53px;font-size:10px;line-height:10px;color:#041e49;font-weight:bold;">19</div>
<div class="t" style="left:-261.5px;width:600px;text-align:center;top:629.53px;font-size:10px;line-height:10px;color:#444746;font-weight:normal;">20</div>
<div class="t" style="left:-261.5px;width:600px;text-align:center;top:648.53px;font-size:10px;line-height:10px;color:#444746;font-weight:normal;">21</div>
<div class="t" style="left:-261.5px;width:600px;text-align:center;top:667.53px;font-size:10px;line-height:10px;color:#444746;font-weight:normal;">22</div>
<div class="t" style="left:-261.5px;width:600px;text-align:center;top:686.53px;font-size:10px;line-height:10px;color:#444746;font-weight:normal;">23</div>
<div class="t" style="left:-261.5px;width:600px;text-align:center;top:705.53px;font-size:10px;line-height:10px;color:#444746;font-weight:normal;">24</div>
<div class="t" style="left:-261.5px;width:600px;text-align:center;top:724.53px;font-size:10px;line-height:10px;color:#444746;font-weight:normal;">25</div>
<div class="t" style="left:-261.5px;width:600px;text-align:center;top:743.53px;font-size:10px;line-height:10px;color:#444746;font-weight:normal;">26</div>
<div class="t" style="left:-261.5px;width:600px;text-align:center;top:762.53px;font-size:10px;line-height:10px;color:#444746;font-weight:normal;">27</div>
<div class="t" style="left:-261.5px;width:600px;text-align:center;top:781.53px;font-size:10px;line-height:10px;color:#444746;font-weight:normal;">28</div>
<div class="t" style="left:-261.5px;width:600px;text-align:center;top:800.53px;font-size:10px;line-height:10px;color:#444746;font-weight:normal;">29</div>
<div class="t" style="left:-261.5px;width:600px;text-align:center;top:819.53px;font-size:10px;line-height:10px;color:#444746;font-weight:normal;">30</div>
<div class="t" style="left:-261.5px;width:600px;text-align:center;top:838.53px;font-size:10px;line-height:10px;color:#444746;font-weight:normal;">31</div>
<div class="t" style="left:-261.5px;width:600px;text-align:center;top:857.53px;font-size:10px;line-height:10px;color:#444746;font-weight:normal;">32</div>
<div class="t" style="left:-261.5px;width:600px;text-align:center;top:876.53px;font-size:10px;line-height:10px;color:#444746;font-weight:normal;">33</div>
<div class="t" style="left:-261.5px;width:600px;text-align:center;top:895.53px;font-size:10px;line-height:10px;color:#444746;font-weight:normal;">34</div>
<div class="t" style="left:-261.5px;width:600px;text-align:center;top:914.53px;font-size:10px;line-height:10px;color:#444746;font-weight:normal;">35</div>
<div class="t" style="left:-125.0px;width:600px;text-align:center;top:275.84px;font-size:12px;line-height:12px;color:#ffffff;font-weight:bold;">Shipment Overview</div>
<div class="t" style="left:158.0px;width:600px;text-align:center;top:275.84px;font-size:12px;line-height:12px;color:#ffffff;font-weight:bold;">Logistics &amp; Schedule &amp; Timing</div>
<div class="t" style="left:443.5px;width:600px;text-align:center;top:275.84px;font-size:12px;line-height:12px;color:#ffffff;font-weight:bold;">Packing &amp; Labeling Configuration</div>
<div class="t" style="left:664.0px;width:600px;text-align:center;top:275.84px;font-size:12px;line-height:12px;color:#ffffff;font-weight:bold;">Progress</div>
<div class="t" style="left:900.0px;width:600px;text-align:center;top:275.84px;font-size:12px;line-height:12px;color:#ffffff;font-weight:bold;">Operation IDs</div>
<div class="t" style="left:1165.0px;width:600px;text-align:center;top:275.84px;font-size:12px;line-height:12px;color:#ffffff;font-weight:bold;">Physical Metrics &amp; Standards</div>
<div class="t" style="left:1401.0px;width:600px;text-align:center;top:275.84px;font-size:12px;line-height:12px;color:#ffffff;font-weight:bold;">Freight Information</div>
<div class="t" style="left:62px;top:295.84px;font-size:12px;line-height:12px;color:#ffff00;font-weight:bold;">Store</div>
<div class="t" style="left:147px;top:295.84px;font-size:12px;line-height:12px;color:#ffff00;font-weight:bold;">Plan Name</div>
<div class="t" style="left:295px;top:295.84px;font-size:12px;line-height:12px;color:#ffff00;font-weight:bold;">Delivery Window Option ID</div>
<div class="t" style="left:462px;top:295.84px;font-size:12px;line-height:12px;color:#ffff00;font-weight:bold;">Transportation Option ID</div>
<div class="t" style="left:628px;top:295.84px;font-size:12px;line-height:12px;color:#ffff00;font-weight:bold;">Case Packed</div>
<div class="t" style="left:744px;top:295.84px;font-size:12px;line-height:12px;color:#ffff00;font-weight:bold;">Pallet Packed</div>
<div class="t" style="left:1069px;top:295.84px;font-size:12px;line-height:12px;color:#000000;font-weight:bold;">Inbound Plan ID</div>
<div class="t" style="left:1205px;top:295.84px;font-size:12px;line-height:12px;color:#000000;font-weight:bold;">Shipment ID</div>
<div class="t" style="left:1338px;top:295.84px;font-size:12px;line-height:12px;color:#ffff00;font-weight:bold;">Weight Unit</div>
<div class="t" style="left:1467px;top:295.84px;font-size:12px;line-height:12px;color:#ffff00;font-weight:bold;">Dimension Unit</div>
<div class="t" style="left:1599px;top:295.84px;font-size:12px;line-height:12px;color:#000000;font-weight:bold;">Declared Value</div>
<div class="t" style="left:1710px;top:295.84px;font-size:12px;line-height:12px;color:#000000;font-weight:bold;">Freight Class</div>
<div class="t" style="left:62px;top:318.84px;font-size:12px;line-height:12px;color:#000000;font-weight:normal;">SS-AE</div>
<div class="t" style="left:147px;top:318.84px;font-size:12px;line-height:12px;color:#000000;font-weight:normal;">test</div>
<div class="t" style="left:628px;top:318.84px;font-size:12px;line-height:12px;color:#000000;font-weight:normal;">YES</div>
<div class="t" style="left:744px;top:318.84px;font-size:12px;line-height:12px;color:#000000;font-weight:normal;">YES</div>
<div class="t" style="left:1338px;top:321.84px;font-size:12px;line-height:12px;color:#000000;font-weight:normal;">KG</div>
<div class="t" style="left:1467px;top:321.84px;font-size:12px;line-height:12px;color:#000000;font-weight:normal;">CM</div>
<div class="t" style="left:1599px;top:321.84px;font-size:12px;line-height:12px;color:#000000;font-weight:normal;">10 USD</div>
<div class="t" style="left:1710px;top:321.84px;font-size:12px;line-height:12px;color:#000000;font-weight:normal;">FC_50</div>
<div class="t" style="left:62px;top:341.84px;font-size:12px;line-height:12px;color:#000000;font-weight:bold;">Status</div>
<div class="t" style="left:147px;top:341.84px;font-size:12px;line-height:12px;color:#000000;font-weight:bold;">FBA ID</div>
<div class="t" style="left:295px;top:341.84px;font-size:12px;line-height:12px;color:#ffff00;font-weight:bold;">Ship Date</div>
<div class="t" style="left:462px;top:341.84px;font-size:12px;line-height:12px;color:#ffff00;font-weight:bold;">Delivery Window Start Date</div>
<div class="t" style="left:628px;top:341.84px;font-size:12px;line-height:12px;color:#ffff00;font-weight:bold;">FNSKU Label Size</div>
<div class="t" style="left:744px;top:341.84px;font-size:12px;line-height:12px;color:#ffff00;font-weight:bold;">FBA Box Label Size</div>
<div class="t" style="left:1069px;top:341.84px;font-size:12px;line-height:12px;color:#000000;font-weight:bold;">Packing Group ID</div>
<div class="t" style="left:1205px;top:341.84px;font-size:12px;line-height:12px;color:#000000;font-weight:bold;">Packing Option ID</div>
<div class="t" style="left:1338px;top:341.84px;font-size:12px;line-height:12px;color:#ffff00;font-weight:bold;">Total QTY</div>
<div class="t" style="left:1467px;top:341.84px;font-size:12px;line-height:12px;color:#ffff00;font-weight:bold;">Total Boxes</div>
<div class="t" style="left:1599px;top:341.84px;font-size:12px;line-height:12px;color:#000000;font-weight:bold;">Pallet Info</div>
<div class="t" style="left:295px;top:364.84px;font-size:12px;line-height:12px;color:#000000;font-weight:normal;">2026-02-18</div>
<div class="t" style="left:462px;top:367.84px;font-size:12px;line-height:12px;color:#000000;font-weight:normal;">2026-02-19</div>
<div class="t" style="left:1338px;top:364.84px;font-size:12px;line-height:12px;color:#000000;font-weight:normal;">75</div>
<div class="t" style="left:1467px;top:364.84px;font-size:12px;line-height:12px;color:#000000;font-weight:normal;">3</div>
<div class="t" style="left:1599px;top:367.84px;font-size:12px;line-height:12px;color:#000000;font-weight:normal;">100x100x100x20x1 STACKABLE</div>
<div class="t" style="left:62px;top:387.84px;font-size:12px;line-height:12px;color:#000000;font-weight:bold;">Reference ID</div>
<div class="t" style="left:147px;top:387.84px;font-size:12px;line-height:12px;color:#000000;font-weight:bold;">Warehouse ID</div>
<div class="t" style="left:295px;top:387.84px;font-size:12px;line-height:12px;color:#ffff00;font-weight:bold;">Fulfillment Split</div>
<div class="t" style="left:462px;top:387.84px;font-size:12px;line-height:12px;color:#ffff00;font-weight:bold;">Send From Address</div>
<div class="t" style="left:628px;top:387.84px;font-size:12px;line-height:12px;color:#000000;font-weight:bold;">Placement Fee</div>
<div class="t" style="left:744px;top:387.84px;font-size:12px;line-height:12px;color:#000000;font-weight:bold;">Transportation Fee</div>
<div class="t" style="left:1069px;top:387.84px;font-size:12px;line-height:12px;color:#000000;font-weight:bold;">Placement Option ID</div>
<div class="t" style="left:1205px;top:387.84px;font-size:12px;line-height:12px;color:#000000;font-weight:bold;">Shipment Confirmed</div>
<div class="t" style="left:1338px;top:387.84px;font-size:12px;line-height:12px;color:#000000;font-weight:bold;">Total Weight</div>
<div class="t" style="left:1467px;top:387.84px;font-size:12px;line-height:12px;color:#000000;font-weight:bold;">Total Volumn</div>
<div class="t" style="left:295px;top:410.84px;font-size:12px;line-height:12px;color:#000000;font-weight:normal;">Box First, Split Later</div>
<div class="t" style="left:1338px;top:410.84px;font-size:12px;line-height:12px;color:#000000;font-weight:normal;">30</div>
<div class="t" style="left:1467px;top:410.84px;font-size:12px;line-height:12px;color:#000000;font-weight:normal;">0.223</div>
<div class="t" style="left:462px;top:410.84px;font-size:12px;line-height:12px;color:#000000;font-weight:normal;">{</div>
<div class="t" style="left:-199.0px;width:600px;text-align:center;top:432.84px;font-size:12px;line-height:12px;color:#ffffff;font-weight:bold;">Box No.</div>
<div class="t" style="left:-82.5px;width:600px;text-align:center;top:432.84px;font-size:12px;line-height:12px;color:#ffffff;font-weight:bold;">MSKU</div>
<div class="t" style="left:75.0px;width:600px;text-align:center;top:432.84px;font-size:12px;line-height:12px;color:#ffffff;font-weight:bold;">Image</div>
<div class="t" style="left:241.5px;width:600px;text-align:center;top:432.84px;font-size:12px;line-height:12px;color:#ffffff;font-weight:bold;">FNSKU</div>
<div class="t" style="left:382.5px;width:600px;text-align:center;top:432.84px;font-size:12px;line-height:12px;color:#ffffff;font-weight:bold;">Product Des.</div>
<div class="t" style="left:501.5px;width:600px;text-align:center;top:432.84px;font-size:12px;line-height:12px;color:#ffffff;font-weight:bold;">ASIN</div>
<div class="t" style="left:664.0px;width:600px;text-align:center;top:432.84px;font-size:12px;line-height:12px;color:#ffffff;font-weight:bold;">Qty/Box</div>
<div class="t" style="left:833.5px;width:600px;text-align:center;top:432.84px;font-size:12px;line-height:12px;color:#ffffff;font-weight:bold;">Box Dimensions</div>
<div class="t" style="left:968.0px;width:600px;text-align:center;top:432.84px;font-size:12px;line-height:12px;color:#ffffff;font-weight:bold;">Box Weight</div>
<div class="t" style="left:1099.0px;width:600px;text-align:center;top:432.84px;font-size:12px;line-height:12px;color:#ffffff;font-weight:bold;">Boxes</div>
<div class="t" style="left:1229.5px;width:600px;text-align:center;top:432.84px;font-size:12px;line-height:12px;color:#ffffff;font-weight:bold;">Total QTY</div>
<div class="t" style="left:1351.0px;width:600px;text-align:center;top:432.84px;font-size:12px;line-height:12px;color:#ffffff;font-weight:bold;">Expiration</div>
<div class="t" style="left:1456.5px;width:600px;text-align:center;top:432.84px;font-size:12px;line-height:12px;color:#ffffff;font-weight:bold;">Label Owner</div>
<div class="t" style="left:1544.0px;width:600px;text-align:center;top:432.84px;font-size:12px;line-height:12px;color:#ffffff;font-weight:bold;">Prep Owner</div>
<div class="t" style="left:1885px;top:432.84px;font-size:12px;line-height:12px;color:#ffffff;font-weight:bold;">Prep Category</div>
<div class="t" style="left:62px;top:457.84px;font-size:12px;line-height:12px;color:#000000;font-weight:normal;">1~3</div>
<div class="t" style="left:147px;top:457.84px;font-size:12px;line-height:12px;color:#000000;font-weight:normal;">SAMPLE-SKU</div>
<div class="t" style="left:462px;top:457.84px;font-size:12px;line-height:12px;color:#000000;font-weight:normal;">X001R6NNCA</div>
<div class="t" style="left:628px;top:457.84px;font-size:12px;line-height:12px;color:#000000;font-weight:normal;">Table Cloth</div>
<div class="t" style="left:744px;top:457.84px;font-size:12px;line-height:12px;color:#000000;font-weight:normal;">B0C1HHDYCA</div>
<div class="t" style="left:866px;top:457.84px;font-size:12px;line-height:12px;color:#000000;font-weight:normal;">25</div>
<div class="t" style="left:1069px;top:457.84px;font-size:12px;line-height:12px;color:#000000;font-weight:normal;">50x42.5x35</div>
<div class="t" style="left:1205px;top:457.84px;font-size:12px;line-height:12px;color:#000000;font-weight:normal;">10</div>
<div class="t" style="left:1338px;top:457.84px;font-size:12px;line-height:12px;color:#000000;font-weight:normal;">3</div>
<div class="t" style="left:1467px;top:457.84px;font-size:12px;line-height:12px;color:#000000;font-weight:normal;">75</div>
<div class="t" style="left:1710px;top:457.84px;font-size:12px;line-height:12px;color:#000000;font-weight:normal;">SELLER</div>
<div class="t" style="left:1810px;top:457.84px;font-size:12px;line-height:12px;color:#000000;font-weight:normal;">SELLER</div>
<div class="t" style="left:1885px;top:457.84px;font-size:12px;line-height:12px;color:#000000;font-weight:normal;">NONE</div>
<svg style="left:856px;top:291px" width="5" height="5" viewBox="0 0 5 5"><path d="M0 0H5V5Z" fill="#000"/></svg>
<svg style="left:1701px;top:337px" width="5" height="5" viewBox="0 0 5 5"><path d="M0 0H5V5Z" fill="#000"/></svg>
<svg style="left:726px;top:322.5px" width="10" height="5" viewBox="0 0 10 5"><path d="M0 0H10L5 5Z" fill="#757575"/></svg>
<svg style="left:847px;top:322.5px" width="10" height="5" viewBox="0 0 10 5"><path d="M0 0H10L5 5Z" fill="#757575"/></svg>
<svg style="left:444px;top:414.5px" width="10" height="5" viewBox="0 0 10 5"><path d="M0 0H10L5 5Z" fill="#757575"/></svg>
<div style="position:absolute;left:459px;top:406px;width:165px;height:21px;overflow:hidden"><div class="t" style="left:9px;top:18.3px;font-size:12px;line-height:12px">"companyName": "SS-S</div></div>
<svg style="left:290px;top:451px" width="40" height="22" viewBox="290 451 40 22"><path d="M292 457.6L292.3 465.2L313.3 471.7L326 466.2L326.4 458.3Z" fill="#f2d83b"/><path d="M313.3 463.6L313.3 471.7L326 466.2L326.4 458.3Z" fill="#e6c938"/><path d="M292 457.6Q298 453 305.2 452.8L326.4 458.3L313.3 463.6Z" fill="#1f5a30"/></svg>
<svg style="left:21px;top:420px" width="6" height="4" viewBox="0 0 6 4"><path d="M0 4H6L3 0Z" fill="#444746"/></svg>
<svg style="left:21px;top:433.5px" width="6" height="4" viewBox="0 0 6 4"><path d="M0 0H6L3 4Z" fill="#444746"/></svg>
<div style="position:absolute;left:1926px;top:247px;width:12px;height:675px;background:#f5f5f5;border-left:1px solid #e0e0e0"></div>
<div style="position:absolute;left:1926px;top:246px;width:12px;height:1px;background:#c4c7c5"></div>
<div style="position:absolute;left:1928.5px;top:455px;width:8.5px;height:351px;background:#cdcdcd;border-radius:4.5px"></div>
<div style="position:absolute;left:1926px;top:890px;width:12px;height:16px;background:#f8f9fa;border-left:1px solid #e0e0e0;border-top:1px solid #e0e0e0"></div>
<div style="position:absolute;left:1926px;top:906px;width:12px;height:16px;background:#f8f9fa;border-left:1px solid #e0e0e0;border-top:1px solid #e0e0e0"></div>
<svg style="left:1929px;top:895px" width="7" height="5" viewBox="0 0 7 5"><path d="M0 4.5H7L3.5 0Z" fill="#757575"/></svg>
<svg style="left:1929px;top:912px" width="7" height="5" viewBox="0 0 7 5"><path d="M0 0H7L3.5 4.5Z" fill="#757575"/></svg>
<div style="position:absolute;left:0px;top:922px;width:1956px;height:13px;background:#fff;border-top:1px solid #e0e0e0"></div>
<div style="position:absolute;left:18px;top:923px;width:40px;height:12px;background:#f8f9fa;border-right:1px solid #d0d0d0"></div>
<div style="position:absolute;left:61px;top:924px;width:1621px;height:9px;background:#cdcdcd;border-radius:4.5px"></div>
<div style="position:absolute;left:1895px;top:923px;width:16px;height:12px;border-left:1px solid #e0e0e0"></div>
<div style="position:absolute;left:1911px;top:923px;width:16px;height:12px;border-left:1px solid #e0e0e0;border-right:1px solid #e0e0e0"></div>
<svg style="left:1901px;top:925px" width="5" height="7" viewBox="0 0 5 7"><path d="M4.5 0V7L0 3.5Z" fill="#757575"/></svg>
<svg style="left:1917px;top:925px" width="5" height="7" viewBox="0 0 5 7"><path d="M0 0V7L4.5 3.5Z" fill="#757575"/></svg>
<div style="position:absolute;left:0px;top:935px;width:1956px;height:37px;background:#f6f8fc;border-top:1px solid #e0e0e0"></div>
<svg style="left:69.70px;top:944.50px" width="20" height="20" viewBox="0 0 24 24"><path d="M19 13h-6v6h-2v-6H5v-2h6V5h2v6h6v2z" fill="#444746"/></svg>
<svg style="left:110.00px;top:944.50px" width="20" height="20" viewBox="0 0 24 24"><path d="M3 18h18v-2H3v2zm0-5h18v-2H3v2zm0-7v2h18V6H3z" fill="#444746"/></svg>
<div style="position:absolute;left:152px;top:936px;width:70px;height:36px;background:#dbe3f5"></div>
<div class="t" style="left:163.5px;top:947.95px;font-size:14px;line-height:14px;color:#0b57d0;font-weight:bold;">STA</div>
<svg style="left:195.50px;top:944.50px" width="20" height="20" viewBox="0 0 24 24"><path d="M7 10l5 5 5-5z" fill="#0b57d0"/></svg>
<svg style="left:1900.00px;top:946.00px" width="20" height="20" viewBox="0 0 24 24"><path d="M15.41 7.41L14 6l-6 6 6 6 1.41-1.41L10.83 12z" fill="#444746"/></svg>
</div></div></body></html>
